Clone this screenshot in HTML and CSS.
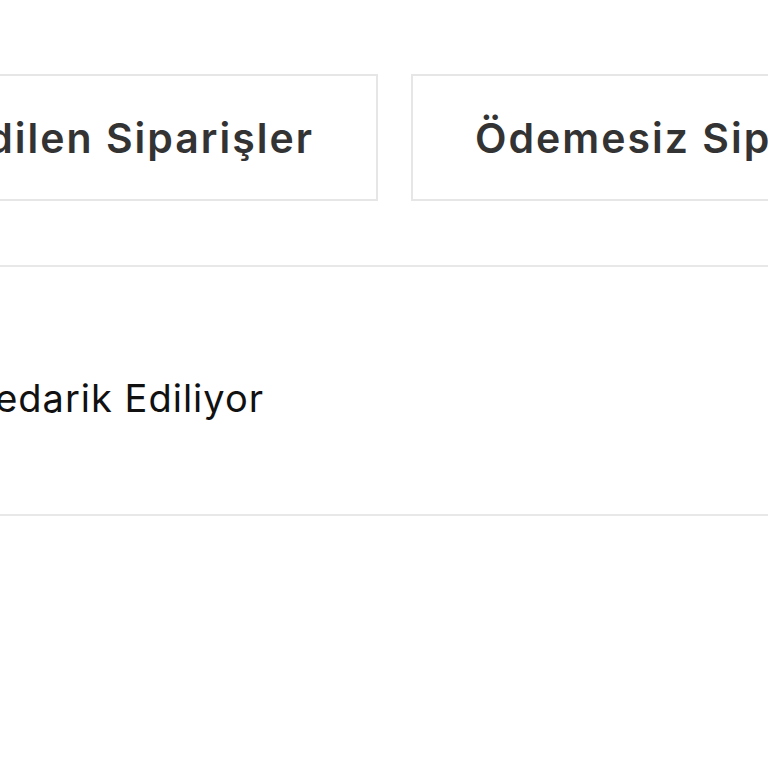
FILE: index.html
```html
<!DOCTYPE html>
<html lang="tr">
<head>
    <meta charset="UTF-8">
    <meta name="viewport" content="width=device-width, initial-scale=1.0">
    <title>Siparişlerim</title>
    <link rel="stylesheet" href="styles.css">
</head>
<body>
    <!-- Order tabs -->
    <div class="tabs">
        <div class="tab-slot">
            <a class="tab" href="#">Teslim Edilen Siparişler</a>
        </div>
        <a class="tab" href="#">Ödemesiz Siparişler</a>
    </div>

    <!-- Order row -->
    <div class="order-row">
        <div class="status-cell">
            <span class="status">Tedarik Ediliyor</span>
        </div>
    </div>
</body>
</html>
```

FILE: styles.css
```css
/* General Styling */
html, body {
    margin: 0;
    padding: 0;
    background-color: #ffffff;
    overflow: hidden;
}
body {
    font-family: Inter, "Open Sans", sans-serif;
    width: 768px;
    height: 768px;
}
.tabs {
    display: flex;
    gap: 33px;
    padding-top: 74px;
    white-space: nowrap;
}
.tab-slot {
    width: 378px;
    flex-shrink: 0;
    display: flex;
    justify-content: flex-end;
}
.tab {
    flex-shrink: 0;
    box-sizing: border-box;
    height: 127px;
    padding: 0 62px;
    border: 2px solid #e6e6e6;
    display: flex;
    align-items: center;
    font-size: 41px;
    font-weight: 600;
    letter-spacing: 2px;
    color: #333333;
    text-decoration: none;
}
.order-row {
    margin-top: 64px;
    height: 247px;
    border-top: 2px solid #e8e8e8;
    border-bottom: 2px solid #e8e8e8;
    display: flex;
    align-items: center;
}
.status-cell {
    width: 264px;
    flex-shrink: 0;
    display: flex;
    justify-content: flex-end;
    padding-top: 14px;
    white-space: nowrap;
}
.status {
    font-size: 38px;
    letter-spacing: 1px;
    color: #111111;
}
```
